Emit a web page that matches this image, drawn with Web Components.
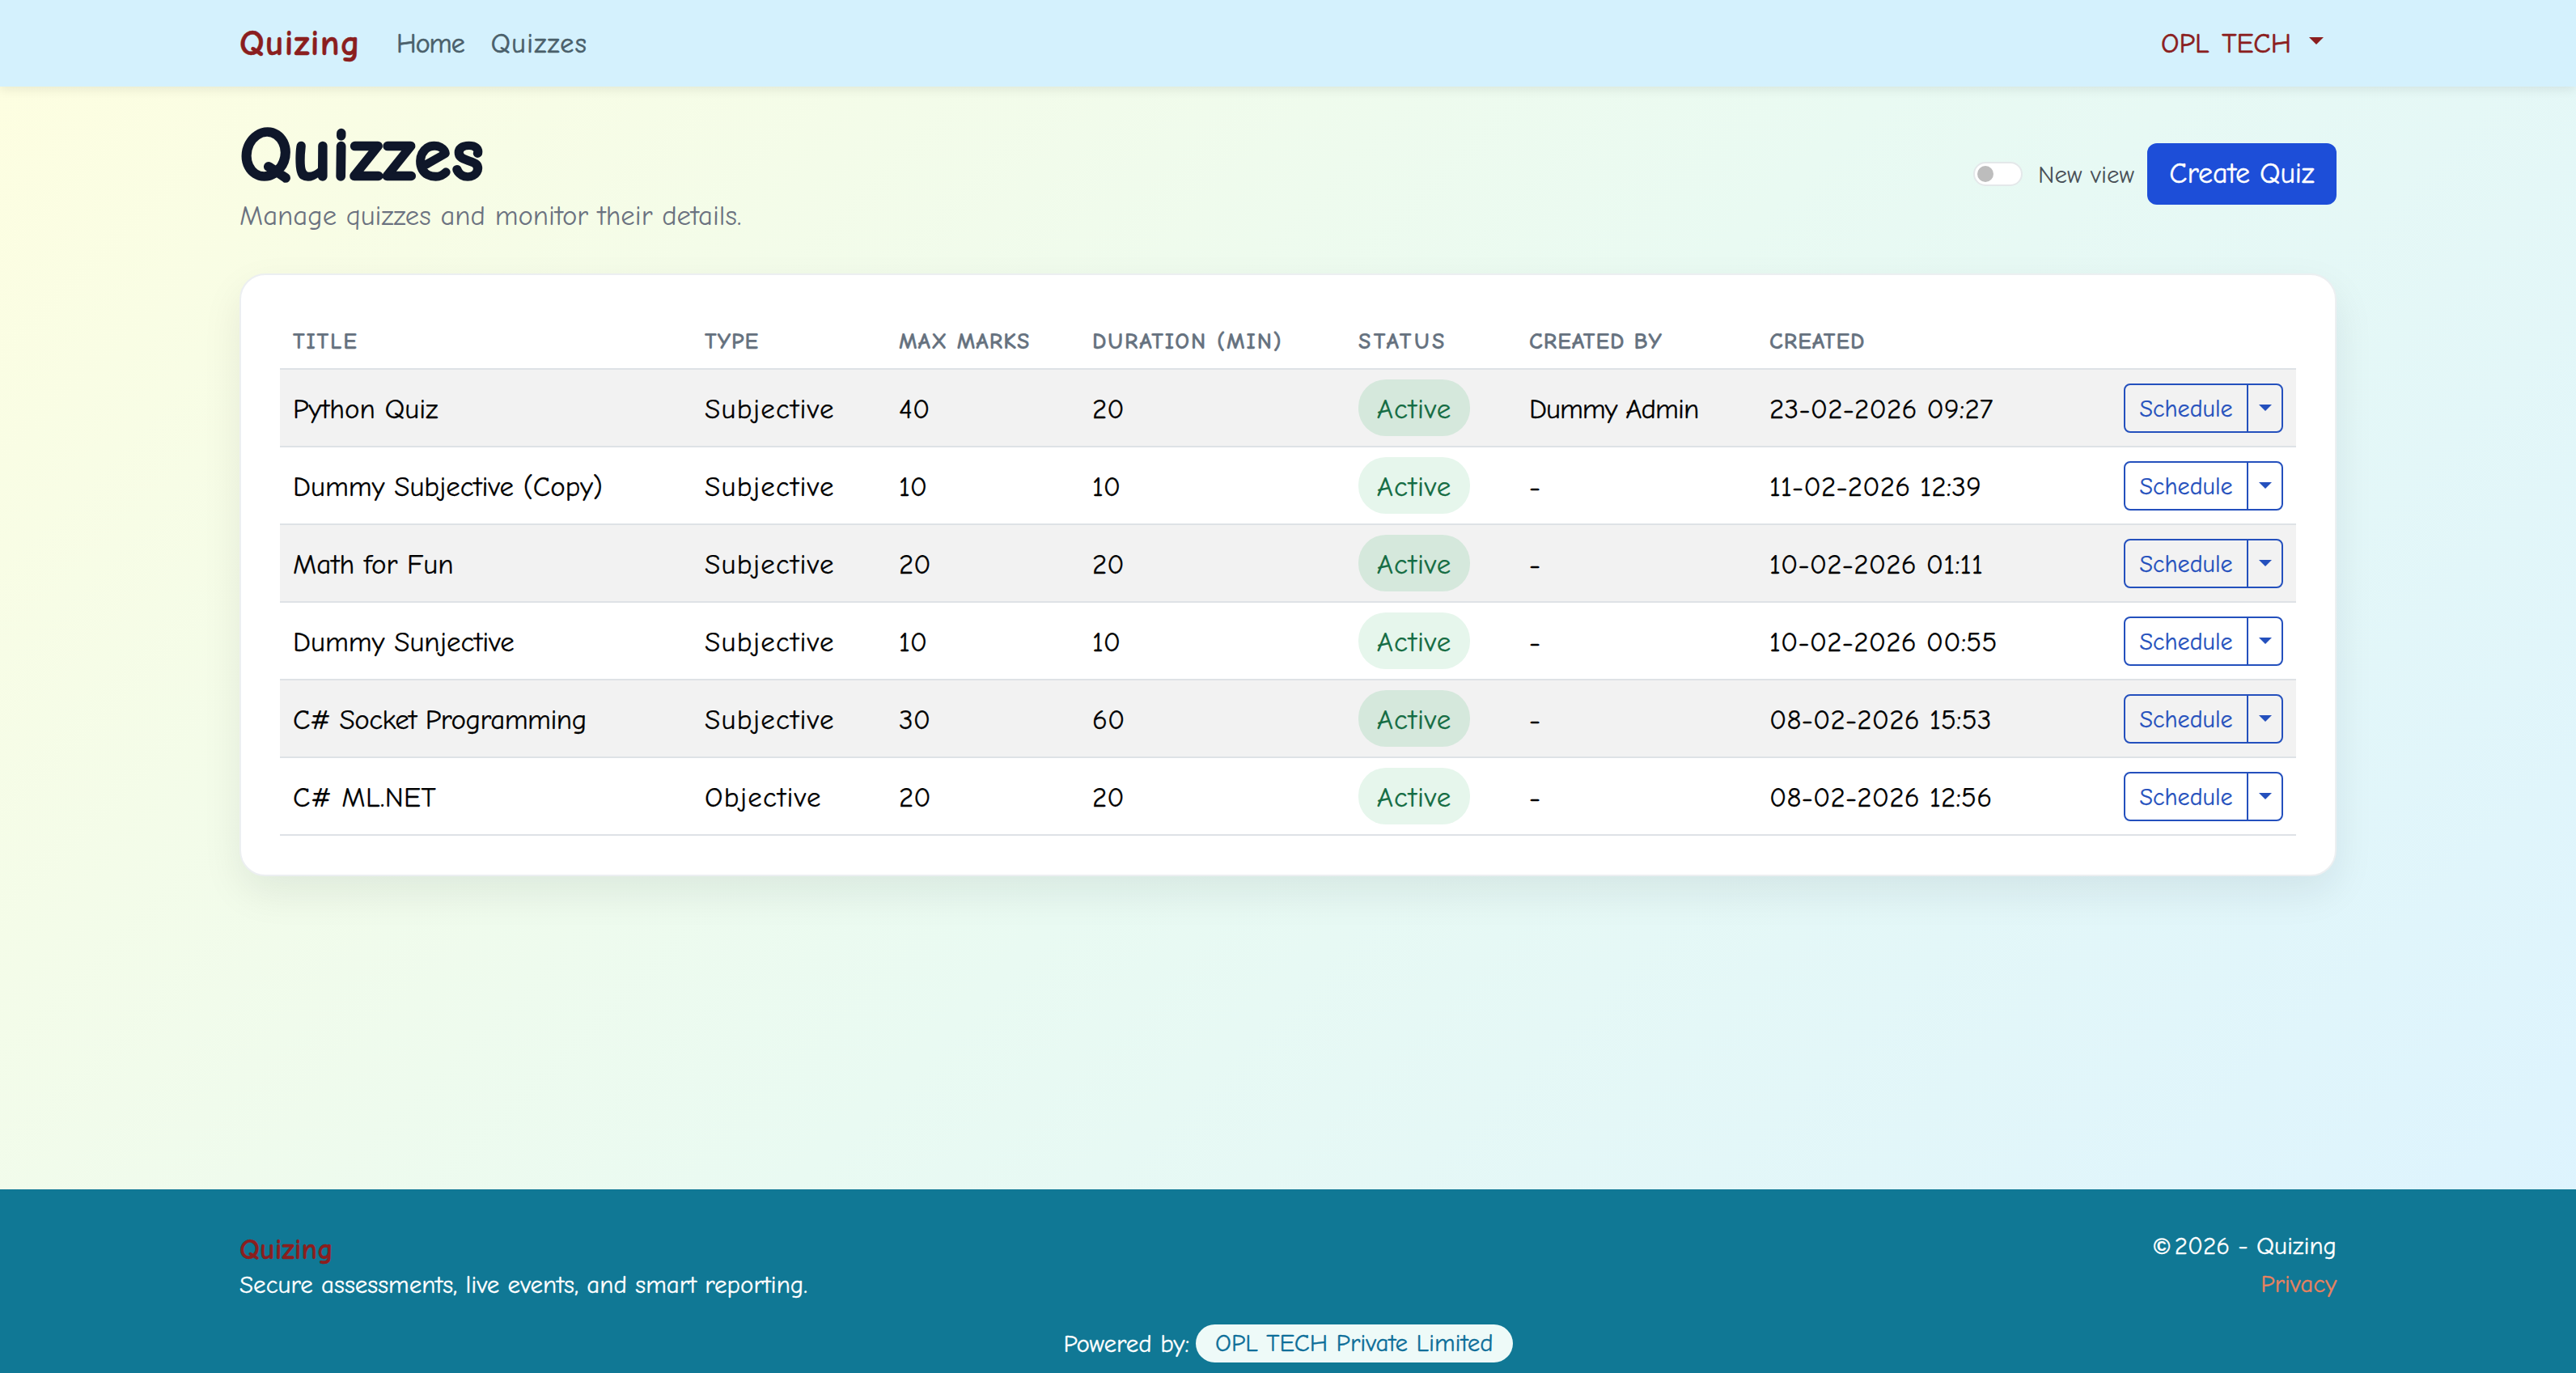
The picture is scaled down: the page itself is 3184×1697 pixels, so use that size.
<!DOCTYPE html>
<html lang="en"><head><meta charset="utf-8"><title>Quizzes</title>
<style>
html,body{margin:0;padding:0;height:100%}
body{font-family:"Comic Sans MS","Comic Neue",cursive;font-size:32px;color:#000;background:linear-gradient(135deg,#fefee0 0%,#e9faf2 50%,#dcf3ff 100%);min-height:100vh;display:flex;flex-direction:column}
</style></head><body>
<quiz-nav></quiz-nav>
<quiz-main>
  <quiz-head></quiz-head>
  <quiz-card>
    <quiz-row header></quiz-row>
    <quiz-row stripe t="Python Quiz" k="Subjective" m="40" d="20" by="Dummy Admin" at="23-02-2026 09:27"></quiz-row>
    <quiz-row t="Dummy Subjective (Copy)" k="Subjective" m="10" d="10" by="-" at="11-02-2026 12:39"></quiz-row>
    <quiz-row stripe t="Math for Fun" k="Subjective" m="20" d="20" by="-" at="10-02-2026 01:11"></quiz-row>
    <quiz-row t="Dummy Sunjective" k="Subjective" m="10" d="10" by="-" at="10-02-2026 00:55"></quiz-row>
    <quiz-row stripe ls="-.55px" t="C# Socket Programming" k="Subjective" m="30" d="60" by="-" at="08-02-2026 15:53"></quiz-row>
    <quiz-row ls=".4px" t="C# ML.NET" k="Objective" m="20" d="20" by="-" at="08-02-2026 12:56"></quiz-row>
  </quiz-card>
</quiz-main>
<quiz-footer></quiz-footer>
<script>
function def(name,html,init){customElements.define(name,class extends HTMLElement{constructor(){super();this.attachShadow({mode:'open'}).innerHTML=html;}connectedCallback(){if(init)init(this);}});}
def('quiz-nav',`<style>
:host{display:block;background:#d4f1fd;box-shadow:0 4px 12px rgba(0,0,0,.08);position:relative}
.c{box-sizing:border-box;max-width:2640px;height:107px;margin:0 auto;padding:0 24px;display:flex;align-items:center}
.b{font-size:44px;font-weight:700;color:#8b1e1e;margin-right:44px;letter-spacing:1.2px;-webkit-text-stroke:.5px #8b1e1e}
a{color:#4a5f6a;text-decoration:none;font-size:34px;-webkit-text-stroke:.6px #4a5f6a}
a.h{letter-spacing:-1px;margin-right:33px}
a.q{letter-spacing:1.5px}
.s{flex:1}
.u{color:#8b1e1e;display:flex;align-items:center;padding-right:16px;word-spacing:4px;font-size:35px;-webkit-text-stroke:.6px #8b1e1e}
.u i{display:block;margin-left:22px;margin-top:-6px;border-top:9.6px solid currentColor;border-left:9.6px solid transparent;border-right:9.6px solid transparent}
</style><div class="c"><span class="b">Quizing</span><a class="h">Home</a><a class="q">Quizzes</a><span class="s"></span><span class="u">OPL TECH<i></i></span></div>`);
def('quiz-main',`<style>:host{display:block;flex:1;box-sizing:border-box;width:100%;max-width:2640px;margin:0 auto;padding:34px 24px 0}</style><slot></slot>`);
def('quiz-head',`<style>
:host{display:flex;justify-content:space-between;align-items:center;margin-bottom:47px}
h1{margin:0;font-size:94px;line-height:102px;font-weight:700;color:#0f172a;-webkit-text-stroke:2.5px #0f172a}
p{margin:0;color:#6b7280;font-size:34.8px;line-height:48px}
.r{display:flex;align-items:center;margin-top:-3px}
.t{box-sizing:border-box;width:61px;height:30px;border-radius:15px;background:#fff;border:2px solid #e4e8ea;padding:3px;display:flex;align-items:center}
.t i{display:block;width:20px;height:20px;border-radius:50%;background:#bdbdbd}
.l{margin-left:19px;margin-right:16px;padding-top:2px;color:#495057;font-size:31px}
.btn{box-sizing:border-box;width:234px;height:76px;border-radius:12px;background:#1d4ed8;color:#fff;display:flex;align-items:center;justify-content:center;font-size:36px;-webkit-text-stroke:.4px #fff}
</style><div><h1>Quizzes</h1><p>Manage quizzes and monitor their details.</p></div>
<div class="r"><span class="t"><i></i></span><span class="l">New view</span><span class="btn">Create Quiz</span></div>`);
def('quiz-card',`<style>:host{display:block;background:#fff;border-radius:32px;padding:48px;border:2px solid #eceff1;box-shadow:0 20px 50px rgba(15,23,42,.08)}</style><slot></slot>`);
const cols='509px 240px 239px 329px 211px 297px 1fr auto';
def('quiz-row',`<style>
:host{display:grid;grid-template-columns:${cols};align-items:center;height:96px;box-sizing:border-box;border-bottom:2px solid #dee2e6;font-size:35px;-webkit-text-stroke:.25px currentColor}
:host([stripe]){background:#f2f2f2}
:host([header]){height:69px;font-size:28px;color:#66727f;font-weight:700;letter-spacing:1px;text-transform:uppercase}
:host([header]) #s{letter-spacing:3.4px}
:host([header]) #d{letter-spacing:1.9px}
:host([header]) #a{letter-spacing:1.8px}
:host([stripe]) .pill{background:#d5e8dc}
span.c{padding-left:16px;white-space:nowrap}
:host(:not([header])) span.c:not(#s){padding-top:2px}
:host(:not([header])) #b{letter-spacing:1.3px}
:host(:not([header])) #z{letter-spacing:.2px}
:host(:not([header])) #y{letter-spacing:-1px}
.pill{display:block;box-sizing:border-box;width:138px;height:70px;line-height:74px;text-align:center;border-radius:34px;background:#e6f6ec;color:#146c43;letter-spacing:1px}
.acts{display:flex;justify-content:flex-end;padding-right:16px}
.bg{display:flex;height:61px;box-sizing:border-box;border:2px solid #2450bd;border-radius:8px;color:#2450bd;font-size:30px;align-items:stretch}
.bg b{font-weight:400;width:150px;padding-top:2px;box-sizing:content-box;display:flex;align-items:center;justify-content:center;border-right:2px solid #2450bd}
.bg u{width:41px;display:flex;align-items:center;justify-content:center}
.bg u i{display:block;border-top:8px solid currentColor;border-left:8px solid transparent;border-right:8px solid transparent}
</style><span class="c" id="a"></span><span class="c" id="b"></span><span class="c" id="m"></span><span class="c" id="d"></span><span class="c" id="s"></span><span class="c" id="y"></span><span class="c" id="z"></span><span class="acts" id="x"></span>`,el=>{
 const r=el.shadowRoot,$=i=>r.getElementById(i);
 if(el.hasAttribute('header')){['Title','Type','Max Marks','Duration (min)','Status','Created by','Created'].forEach((t,i)=>{$('abmdsyz'[i]).textContent=t});return;}
 $('a').textContent=el.getAttribute('t');if(el.hasAttribute('ls'))$('a').style.letterSpacing=el.getAttribute('ls');
 $('b').textContent=el.getAttribute('k');$('m').textContent=el.getAttribute('m');$('d').textContent=el.getAttribute('d');
 $('s').innerHTML='<span class="pill">Active</span>';$('y').textContent=el.getAttribute('by');$('z').textContent=el.getAttribute('at');
 $('x').innerHTML='<span class="bg"><b>Schedule</b><u><i></i></u></span>';
});
def('quiz-footer',`<style>
:host{display:block;background:#107895;color:#fff;height:227px;-webkit-text-stroke:.3px currentColor}
.c{box-sizing:border-box;max-width:2640px;margin:0 auto;padding:54px 24px 0}
.top{display:flex;justify-content:space-between}
.q{color:#8b1e1e;font-size:36px;font-weight:700;line-height:42px}
.s{font-size:31px;line-height:44px}
.r{text-align:right;font-size:31px;line-height:47px;margin-top:-7px}
.r em{font-style:normal;font-family:"Liberation Sans",sans-serif;font-size:28px;font-weight:700;margin-right:-5px}
.p{color:#e8825f}
.pw{display:flex;justify-content:center;align-items:center;font-size:31px;margin-top:26px}
.pill{margin-left:8px;background:#eefaf8;color:#0d6e99;height:47px;line-height:47px;padding:0 24px;border-radius:24px}
</style><div class="c"><div class="top"><div><div class="q">Quizing</div><div class="s">Secure assessments, live events, and smart reporting.</div></div><div class="r"><div><em>©</em> 2026 - Quizing</div><div class="p">Privacy</div></div></div>
<div class="pw">Powered by:<span class="pill">OPL TECH Private Limited</span></div></div>`);
</script>
</body></html>
